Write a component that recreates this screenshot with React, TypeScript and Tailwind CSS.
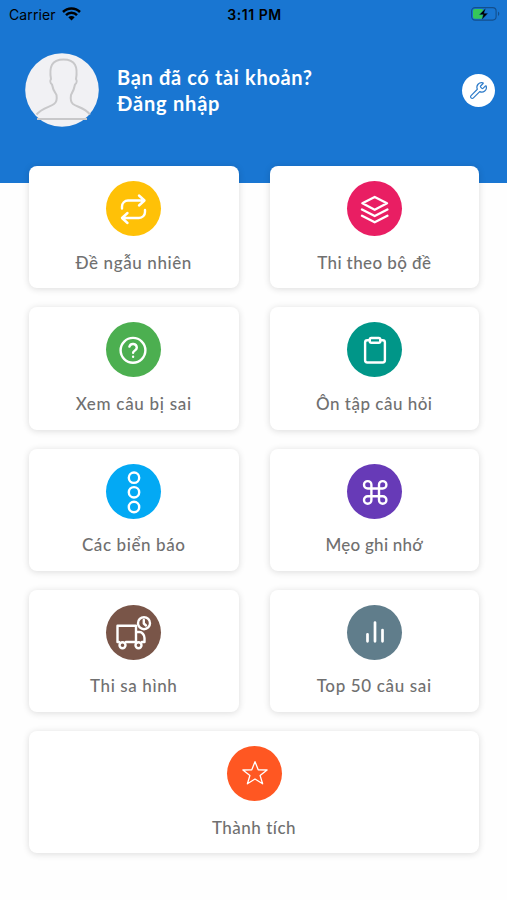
import React from "react";
import { Wrench } from "lucide-react";

interface MenuItem {
    label: string;
    color: string;
    tracking: string;
    wide?: boolean;
    icon: React.ReactNode;
}

const items: MenuItem[] = [
    {
        label: "Đề ngẫu nhiên",
        color: "bg-[#ffc107]",
        tracking: "tracking-[0.6px]",
        icon: <path d="M33 14.5l5.500 5-5.500 5M38 19.500H22a6 6 0 0 0-6 6V27.500M21.500 32l-5.500 5 5.500 5M16.500 37H33a6 6 0 0 0 6-6v-2" />,
    },
    {
        label: "Thi theo bộ đề",
        color: "bg-[#e91e63]",
        tracking: "tracking-[0.4px]",
        icon: <path d="M27.7 16L40 22.3l-12.3 6.4-12.3-6.4zM15 28.5L27.7 35l12.7-6.5M15 34.7l12.7 6.5 12.7-6.5" />,
    },
    {
        label: "Xem câu bị sai",
        color: "bg-[#4caf50]",
        tracking: "tracking-[0.7px]",
        icon: (
            <>
                <circle cx="27" cy="28.3" r="12.4" />
                <path d="M23.4 24.6a3.8 3.8 0 0 1 7.4 1.1c0 2.4-3.7 3.2-3.7 5M27.1 34.7v.1" />
            </>
        ),
    },
    {
        label: "Ôn tập câu hỏi",
        color: "bg-[#009688]",
        tracking: "tracking-[0.5px]",
        icon: (
            <>
                <path d="M22.7 18.3h-2.4a2.2 2.2 0 0 0-2.2 2.2v17.8a2.2 2.2 0 0 0 2.2 2.2h15.4a2.2 2.2 0 0 0 2.2-2.2V20.5a2.2 2.2 0 0 0-2.2-2.2h-2.4" />
                <rect x="22.8" y="16" width="10.5" height="4.7" rx="1.5" />
            </>
        ),
    },
    {
        label: "Các biển báo",
        color: "bg-[#03a9f4]",
        tracking: "tracking-[0.6px]",
        icon: (
            <>
                <circle cx="28" cy="13.7" r="5.2" />
                <circle cx="28" cy="28.3" r="5.2" />
                <circle cx="28" cy="43" r="5.2" />
            </>
        ),
    },
    {
        label: "Mẹo ghi nhớ",
        color: "bg-[#673ab7]",
        tracking: "tracking-[0.25px]",
        icon: (
            <path d="M32 20.8v15.2a3.7 3.7 0 1 0 3.7-3.7H20.7a3.7 3.7 0 1 0 3.7 3.7V20.8a3.7 3.7 0 1 0-3.7 3.7h15a3.7 3.7 0 1 0-3.7-3.7z" />
        ),
    },
    {
        label: "Thi sa hình",
        color: "bg-[#795548]",
        tracking: "tracking-[0.6px]",
        icon: (
            <>
                <path d="M13 37h-1.5V20.8H30V37H20M30 27h3.5c2.5 0 5 3 5 6v4h-2.5" />
                <circle cx="16.5" cy="40.2" r="3" />
                <circle cx="32.5" cy="40.2" r="3" />
                <circle cx="38" cy="18.2" r="6" />
                <path d="M37.8 15v3.5l2.2 2" />
            </>
        ),
    },
    {
        label: "Top 50 câu sai",
        color: "bg-[#607d8b]",
        tracking: "tracking-[0.65px]",
        icon: <path strokeWidth="2.7" d="M20.5 29.3v7M28 17.5v18.8M35.5 25v11.3" />,
    },
    {
        label: "Thành tích",
        color: "bg-[#ff5722]",
        tracking: "tracking-[0.5px]",
        wide: true,
        icon: (
            <path
                strokeWidth="1.3"
                d="M28 15.7l3.2 8.1 8.9.2-7 5.5 2.5 8.3-7.6-4.8-7.6 4.8 2.5-8.3-7-5.500 8.900-.2z"
            />
        ),
    },
];

function StatusBar() {
    return (
        <div className="flex h-[28px] items-center justify-between pl-[9px] pr-[7px] font-['Inter','Liberation_Sans',sans-serif] text-black">
            <div className="flex w-[120px] items-center gap-[6px]">
                <span className="text-[14px] tracking-[0.1px]">Carrier</span>
                <svg width="19" height="14" viewBox="0 0 19 14" fill="none" stroke="#000" strokeWidth="2.5">
                    <path d="M1 5c4.7-4.7 12.3-4.7 17 0M4 8.1c3-3 8-3 11 0" />
                    <path d="M6.3 10.3c1.9-1.7 4.5-1.7 6.4 0L9.5 13.5z" fill="#000" stroke="none" />
                </svg>
            </div>
            <span className="text-[14px] font-semibold tracking-[0.55px]">3:11 PM</span>
            <div className="flex w-[120px] justify-end">
                <svg width="29" height="14" viewBox="0 0 29 14">
                    <rect x=".6" y=".6" width="24.5" height="12.5" rx="3.5" fill="none" stroke="#134f8d" strokeWidth="1.1" />
                    <path d="M27 4.600c1.800.8 1.800 3.700 0 4.500z" fill="#134f8d" />
                    <rect x="2" y="2" width="10.5" height="9.7" rx="1.8" fill="#35c759" />
                    <path d="M14.8 1L8.2 7.7h4L10.6 13l6.5-6.8h-4z" fill="#000" stroke="#1976d2" strokeWidth=".4" />
                </svg>
            </div>
        </div>
    );
}

function Avatar() {
    return (
        <svg className="shrink-0" width="74" height="74" viewBox="0 0 74 74" fill="none">
            <circle cx="37" cy="37" r="36.8" fill="#f1f1f4" />
            <path
                d="M11.5 61.5C17 55 25 54 29 51C32.5 48.500 32 45 31.500 42C29 38.500 27.500 35 27 31.500C25 30 25 27.500 26 26C24 14 26.500 6.500 38.500 6.500S53 14 51 26C52 27.500 52 30 50 31.500C49.500 35 48 38.500 46 42C45.500 45 45 48.500 48 51C52 54 60 55 65 61.500M12 66h50"
                stroke="#c8c8ca"
                strokeWidth="2"
            />
        </svg>
    );
}

function MenuCard({ item }: { item: MenuItem }) {
    return (
        <button
            className={`flex h-[122.3px] flex-col items-center rounded-[8px] bg-white pt-[15px] shadow-[0_1px_7px_rgba(0,0,0,0.14)] ${item.wide ? "col-span-2" : ""}`}
        >
            <span className={`h-[55px] w-[55px] shrink-0 rounded-full ${item.color}`}>
                <svg
                    width="55"
                    height="55"
                    viewBox="0 0 55 55"
                    fill="none"
                    stroke="#fff"
                    strokeWidth="2.4"
                    strokeLinecap="round"
                    strokeLinejoin="round"
                >
                    {item.icon}
                </svg>
            </span>
            <span className={`mt-[14.5px] whitespace-nowrap text-[17px] font-medium leading-[24px] text-[#707070] ${item.tracking}`}>
                {item.label}
            </span>
        </button>
    );
}

export default function App() {
    return (
        <div className="h-[900px] w-[507px] overflow-hidden bg-[#fefefe] font-['Lato','Noto_Sans',sans-serif]">
            <header className="h-[183px] bg-[#1976d2]">
                <StatusBar />
                <div className="flex items-center pl-[25px] pr-[12px] pt-[25px]">
                    <Avatar />
                    <div className="ml-[18px] flex-1 text-[20px] font-bold leading-[26px] text-white">
                        <p className="tracking-[0.65px]">Bạn đã có tài khoản?</p>
                        <p className="tracking-[0.8px]">Đăng nhập</p>
                    </div>
                    <button className="flex h-[33px] w-[33px] items-center justify-center rounded-full bg-white">
                        <Wrench size={19} strokeWidth={1.5} color="#2d7bc9" />
                    </button>
                </div>
            </header>

            {/* Menu */}
            <main className="-mt-[17px] grid grid-cols-2 gap-x-[31px] gap-y-[19px] pl-[29px] pr-[28px]">
                {items.map((item) => (
                    <MenuCard key={item.label} item={item} />
                ))}
            </main>
        </div>
    );
}
